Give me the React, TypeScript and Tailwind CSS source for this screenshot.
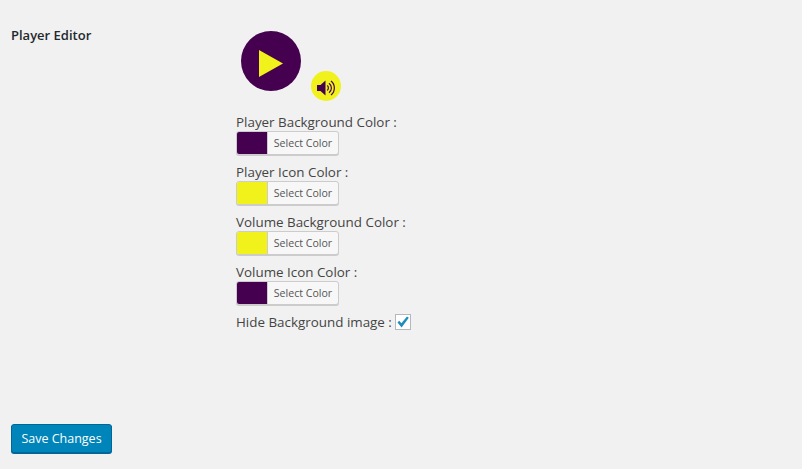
const PURPLE = 'bg-[#450050]'
const YELLOW = 'bg-[#f1f11b]'

const COLOR_ROWS = [
  { label: 'Player Background Color :', swatch: PURPLE },
  { label: 'Player Icon Color :', swatch: YELLOW },
  { label: 'Volume Background Color :', swatch: YELLOW },
  { label: 'Volume Icon Color :', swatch: PURPLE },
]

// 色選択ボタン1つ分
const ColorButton = ({ swatch }: { swatch: string }) => (
  <button className="flex h-6 w-[103px] items-stretch overflow-hidden rounded-[3px] border border-[#cccccc] bg-[#f7f7f7] shadow-[0_1px_0_#cccccc]">
    <span className={`w-[30px] ${swatch}`} />
    <span className="flex flex-1 items-center justify-center border-l border-[#cccccc] pt-[1px] text-[10.6px] text-[#555555]">
      Select Color
    </span>
  </button>
)

const App = () => {
  return (
    <div className="flex h-[469px] w-[802px] flex-col bg-[#f1f1f1] font-['Open_Sans','Noto_Sans',sans-serif] text-[13.4px] text-[#444444]">
      <div className="flex flex-1">
        <div className="w-[236px] pl-[11px] pt-[26px] text-[13px] leading-[18px] font-semibold text-[#23282d]">
          Player Editor
        </div>
        <div className="flex flex-col">
          <div className="flex h-[80px] items-start pt-[31px] pl-[5px]">
            <div className={`flex h-[60px] w-[60px] items-center justify-center rounded-full ${PURPLE}`}>
              <svg width="24" height="27" viewBox="0 0 24 27" className="mt-[5px]">
                <polygon points="0,0 24,13.5 0,27" fill="#f1f11b" />
              </svg>
            </div>
            <div className={`mt-[40px] ml-[10px] flex h-[30px] w-[30px] items-center justify-center rounded-full ${YELLOW}`}>
              <svg width="18" height="16" viewBox="0 0 18 16" className="mt-[3px]">
                <polygon points="0,5 3.5,5 8.5,0.5 8.5,15.5 3.5,11 0,11" fill="#450050" />
                <g fill="none" stroke="#450050" strokeWidth="1.2">
                  <path d="M10.2 5.6 A3 3 0 0 1 10.2 10.4" />
                  <path d="M12 3.2 A6 6 0 0 1 12 12.8" />
                  <path d="M14 1 A9 9 0 0 1 14 15" />
                </g>
              </svg>
            </div>
          </div>
          <div className="mt-[33px] flex flex-col gap-[8px]">
            {COLOR_ROWS.map((row) => (
              <div key={row.label} className="flex flex-col">
                <span className="h-[18px] leading-[18px]">{row.label}</span>
                <ColorButton swatch={row.swatch} />
              </div>
            ))}
            <label className="flex h-[18px] items-center gap-[3px] leading-[18px]">
              Hide Background image :
              <span className="flex h-4 w-4 items-center justify-center border border-[#b4b9be] bg-white">
                <svg width="14" height="14" viewBox="0 0 14 14">
                  <path d="M1.5 7.5 L3.2 5.8 L5.4 8.2 L11 1.5 L12.8 2.8 L5.6 12.5 Z" fill="#1e8cbe" />
                </svg>
              </span>
            </label>
          </div>
        </div>
      </div>
      <div className="pb-4 pl-[11px]">
        <button className="h-[29px] w-[101px] rounded-[3px] border border-[#006799] bg-[#0085ba] pt-[1px] text-[12.5px] text-white shadow-[0_1px_0_#006799]">
          Save Changes
        </button>
      </div>
    </div>
  )
}

export default App
